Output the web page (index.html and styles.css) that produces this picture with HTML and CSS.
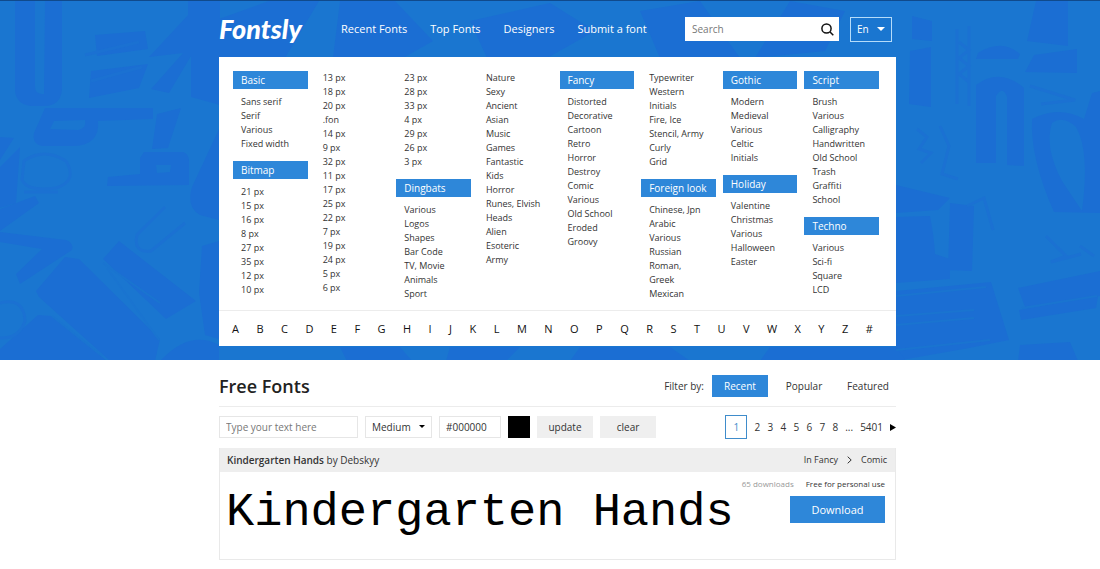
FILE: index.html
```html
<!DOCTYPE html>
<html lang="en">
<head>
<meta charset="utf-8">
<meta name="viewport" content="width=device-width, initial-scale=1">
<title>Fontsly - Free Fonts</title>
<link rel="stylesheet" href="styles.css">
</head>
<body>
<div class="hero">
  <svg class="hero-art" viewBox="0 0 1100 360" preserveAspectRatio="xMidYMin slice" aria-hidden="true">
    <g class="art-fill">
      <path d="M15 0h20v85q0 9 9 8l1-93h17v88q-1 17-18 17H31q-16-2-16-17z"/>
      <path fill-rule="evenodd" d="M45 107h108v11l-55 2q2 24-24 25H42q-10-2-8-13zM54 120l-4 8 28 1q9-2 7-10z"/>
      <path d="M188 0h32v104l-29-8V55l-22 37-18-4 32-36-34 4 39-42z"/>
      <path fill-rule="evenodd" d="M108 176l32-3v-16l4-6h39q6 2 6 9v24l-82 1zM156 164l1 8 13-1 1-7z"/>
      <path d="M157 113l24-6-13 40-16 1zM0 136l14 1-14 22zM0 166l20-20-4 56-16 5zM0 208l35-13 4 7-39 28zM0 231l66 8q8 3 6 10l-52 34-4-10 26-25-42-7z"/>
      <path d="M219 128l-27 58q-6 20 8 28l19 5zM202 245l-3 47 6 42 14 4v-98zM119 240l77 60-30 18-63-60zM65 256l14 2 81 80-5 22h-45L39 296l-3-6zM0 348l38-34 13 1 56 45H0z"/>
      <path d="M160 360q30-32 59-16v16zM95 34l50-4 3 18-51 7zM91 70l57-7-9 24-50 10z"/>
      <path d="M1036 0l-9 40 41 5V0zM978 52q24-15 42 1l-2 5h-42zM1034 54l43-6v24l-52-1zM976 84q24-18 48 3v78l-17-1V96q-4-12-11-1v67h-20z"/>
      <path fill-rule="evenodd" d="M1032 118q27-14 52 0l8-26 8-2v122l-46-1q-24-54-22-93zM1052 122q-8 24 10 58l20 30q8-60-6-84-13-12-24-4z"/>
      <path d="M912 15l20 5v20l-20-2zM910 50l21-4v60l-22-3zM896 184l54 13-12 12-42 3zM896 216l34-1q4 20 5 38l15 5v20l-54 4zM950 202l24 3-2 65-24-1zM896 290l95-9 18 58-40 8-73 13zM1018 287l82-17v25l-75 11zM1019 309l79-14-2 12-75 12zM1020 344l50-3 8 19h-60z"/>
      <path d="M219 18l50-18h50L285 57h-66zM340 0h55l38 40-30 17h-70zM470 20l80-18 45 28-48 27h-60zM640 10l60-10 40 57h-80zM790 0l55 10-20 40-70 7zM340 346h60l12 14h-65zM450 346h70l-14 14h-60zM580 346h90l20 14H570zM770 346h126l10 14H760z"/>
    </g>
    <g class="art-line">
      <path d="M24 160q20-14 42 0 12 20-10 27-28 4-34-8zM0 302q24-6 25 18-6 18-25 17M165 206l-28 28q-4 18 14 16l34-28M85 54l54-13M91 80l51-14M24 191h34"/>
      <path d="M957 28v75M969 25v80M959 41l10 8-10 8 10 8-10 8 10 8M917 128l10 8-8 12 12 4-10 10M940 125l9 20-7 28 16 5M1030 85l45 14-34 4M1046 235l20 20-15 6 30-8M1080 245l14 10M967 205l17-8 9 32"/>
    </g>
    <g class="art-light">
      <path d="M103 262l57 40M52 315l50 40M107 267l52 72M896 295l90-9M896 315l78-6M896 324l78-7M896 349l94-10M1022 307l75-12"/>
    </g>
  </svg>

  <div class="container">
    <header class="topbar">
      <a class="logo" href="#">Fontsly</a>
      <nav class="main-nav" aria-label="Main">
        <a href="#">Recent Fonts</a>
        <a href="#">Top Fonts</a>
        <a href="#">Designers</a>
        <a href="#">Submit a font</a>
      </nav>
      <form class="search" role="search">
        <input type="search" placeholder="Search" aria-label="Search">
        <button type="submit" aria-label="Search">
          <svg viewBox="0 0 13 13" width="13" height="13" aria-hidden="true"><circle cx="5.5" cy="5.5" r="4.6"/><path d="M9 9l3.3 3.3"/></svg>
        </button>
      </form>
      <div class="select lang">
        <select aria-label="Language"><option>En</option></select>
        <svg viewBox="0 0 8 4" width="8" height="4" aria-hidden="true"><path d="M0 0h8L4 4z"/></svg>
      </div>
    </header>

    <div class="panel">
      <div class="categories">
        <div class="col">
          <section><h2>Basic</h2>
            <ul><li><a href="#">Sans serif</a></li><li><a href="#">Serif</a></li><li><a href="#">Various</a></li><li><a href="#">Fixed width</a></li></ul></section>
          <section><h2>Bitmap</h2>
            <ul><li><a href="#">21 px</a></li><li><a href="#">15 px</a></li><li><a href="#">16 px</a></li><li><a href="#">8 px</a></li><li><a href="#">27 px</a></li><li><a href="#">35 px</a></li><li><a href="#">12 px</a></li><li><a href="#">10 px</a></li></ul></section>
        </div>
        <div class="col">
          <section><ul><li><a href="#">13 px</a></li><li><a href="#">18 px</a></li><li><a href="#">20 px</a></li><li><a href="#">.fon</a></li><li><a href="#">14 px</a></li><li><a href="#">9 px</a></li><li><a href="#">32 px</a></li><li><a href="#">11 px</a></li><li><a href="#">17 px</a></li><li><a href="#">25 px</a></li><li><a href="#">22 px</a></li><li><a href="#">7 px</a></li><li><a href="#">19 px</a></li><li><a href="#">24 px</a></li><li><a href="#">5 px</a></li><li><a href="#">6 px</a></li></ul></section>
        </div>
        <div class="col">
          <section><ul><li><a href="#">23 px</a></li><li><a href="#">28 px</a></li><li><a href="#">33 px</a></li><li><a href="#">4 px</a></li><li><a href="#">29 px</a></li><li><a href="#">26 px</a></li><li><a href="#">3 px</a></li></ul></section>
          <section><h2>Dingbats</h2>
            <ul><li><a href="#">Various</a></li><li><a href="#">Logos</a></li><li><a href="#">Shapes</a></li><li><a href="#">Bar Code</a></li><li><a href="#">TV, Movie</a></li><li><a href="#">Animals</a></li><li><a href="#">Sport</a></li></ul></section>
        </div>
        <div class="col">
          <section><ul><li><a href="#">Nature</a></li><li><a href="#">Sexy</a></li><li><a href="#">Ancient</a></li><li><a href="#">Asian</a></li><li><a href="#">Music</a></li><li><a href="#">Games</a></li><li><a href="#">Fantastic</a></li><li><a href="#">Kids</a></li><li><a href="#">Horror</a></li><li><a href="#">Runes, Elvish</a></li><li><a href="#">Heads</a></li><li><a href="#">Alien</a></li><li><a href="#">Esoteric</a></li><li><a href="#">Army</a></li></ul></section>
        </div>
        <div class="col">
          <section><h2>Fancy</h2>
            <ul><li><a href="#">Distorted</a></li><li><a href="#">Decorative</a></li><li><a href="#">Cartoon</a></li><li><a href="#">Retro</a></li><li><a href="#">Horror</a></li><li><a href="#">Destroy</a></li><li><a href="#">Comic</a></li><li><a href="#">Various</a></li><li><a href="#">Old School</a></li><li><a href="#">Eroded</a></li><li><a href="#">Groovy</a></li></ul></section>
        </div>
        <div class="col">
          <section><ul><li><a href="#">Typewriter</a></li><li><a href="#">Western</a></li><li><a href="#">Initials</a></li><li><a href="#">Fire, Ice</a></li><li><a href="#">Stencil, Army</a></li><li><a href="#">Curly</a></li><li><a href="#">Grid</a></li></ul></section>
          <section><h2>Foreign look</h2>
            <ul><li><a href="#">Chinese, Jpn</a></li><li><a href="#">Arabic</a></li><li><a href="#">Various</a></li><li><a href="#">Russian</a></li><li><a href="#">Roman,<br>Greek</a></li><li><a href="#">Mexican</a></li></ul></section>
        </div>
        <div class="col">
          <section><h2>Gothic</h2>
            <ul><li><a href="#">Modern</a></li><li><a href="#">Medieval</a></li><li><a href="#">Various</a></li><li><a href="#">Celtic</a></li><li><a href="#">Initials</a></li></ul></section>
          <section><h2>Holiday</h2>
            <ul><li><a href="#">Valentine</a></li><li><a href="#">Christmas</a></li><li><a href="#">Various</a></li><li><a href="#">Halloween</a></li><li><a href="#">Easter</a></li></ul></section>
        </div>
        <div class="col">
          <section><h2>Script</h2>
            <ul><li><a href="#">Brush</a></li><li><a href="#">Various</a></li><li><a href="#">Calligraphy</a></li><li><a href="#">Handwritten</a></li><li><a href="#">Old School</a></li><li><a href="#">Trash</a></li><li><a href="#">Graffiti</a></li><li><a href="#">School</a></li></ul></section>
          <section><h2>Techno</h2>
            <ul><li><a href="#">Various</a></li><li><a href="#">Sci-fi</a></li><li><a href="#">Square</a></li><li><a href="#">LCD</a></li></ul></section>
        </div>
      </div>
      <nav class="alphabet" aria-label="Fonts by letter">
        <a href="#">A</a><a href="#">B</a><a href="#">C</a><a href="#">D</a><a href="#">E</a><a href="#">F</a><a href="#">G</a><a href="#">H</a><a href="#">I</a><a href="#">J</a><a href="#">K</a><a href="#">L</a><a href="#">M</a><a href="#">N</a><a href="#">O</a><a href="#">P</a><a href="#">Q</a><a href="#">R</a><a href="#">S</a><a href="#">T</a><a href="#">U</a><a href="#">V</a><a href="#">W</a><a href="#">X</a><a href="#">Y</a><a href="#">Z</a><a href="#">#</a>
      </nav>
    </div>
  </div>
</div>

<main class="container">
  <div class="heading">
    <h1>Free Fonts</h1>
    <div class="filter">
      <span>Filter by:</span>
      <button type="button" class="tab active">Recent</button>
      <button type="button" class="tab">Popular</button>
      <button type="button" class="tab">Featured</button>
    </div>
  </div>

  <div class="toolbar">
    <form class="preview-form">
      <input class="field text" type="text" placeholder="Type your text here" aria-label="Preview text">
      <div class="select size">
        <select aria-label="Size"><option>Medium</option></select>
        <svg viewBox="0 0 6 3" width="6" height="3" aria-hidden="true"><path d="M0 0h6L3 3z"/></svg>
      </div>
      <input class="field hex" type="text" value="#000000" aria-label="Colour">
      <button type="button" class="swatch" aria-label="Pick a colour"></button>
      <button type="button" class="btn-grey">update</button>
      <button type="button" class="btn-grey">clear</button>
    </form>
    <nav class="pages" aria-label="Pages">
      <a class="current" href="#">1</a>
      <a href="#">2</a><a href="#">3</a><a href="#">4</a><a href="#">5</a><a href="#">6</a><a href="#">7</a><a href="#">8</a><span>...</span><a href="#">5401</a>
      <a class="next" href="#" aria-label="Next page"><svg viewBox="0 0 6 7" width="6" height="7" aria-hidden="true"><path d="M0 0l6 3.5L0 7z"/></svg></a>
    </nav>
  </div>

  <article class="font-card">
    <header class="font-head">
      <div><a class="font-name" href="#">Kindergarten Hands</a> by <a href="#">Debskyy</a></div>
      <div class="crumbs"><span>In <a href="#">Fancy</a></span>
        <svg viewBox="0 0 5 8" width="5" height="8" aria-hidden="true"><path d="M.7.7L4.2 4 .7 7.3"/></svg>
        <a href="#">Comic</a></div>
    </header>
    <div class="font-body">
      <div class="sample">Kindergarten Hands</div>
      <div class="side">
        <div class="meta"><span class="count">65 downloads</span><span>Free for personal use</span></div>
        <button type="button" class="download">Download</button>
      </div>
    </div>
  </article>
</main>
</body>
</html>
```
FILE: styles.css
```css
* { box-sizing: border-box; }

body {
  margin: 0;
  background: #fff;
  color: #333;
  font-family: "Open Sans", "Noto Sans", sans-serif;
  font-size: 10px;
  line-height: 14px;
}

a { color: inherit; text-decoration: none; }
h1, h2, ul { margin: 0; padding: 0; }
ul { list-style: none; }
input, select, button { margin: 0; border: 0; border-radius: 0; font: inherit; color: inherit; }
button { padding: 0; background: none; cursor: pointer; }
svg { display: block; }

.hero, main { padding-left: 15px; }

.container > .topbar, .container > .panel, .heading, .toolbar, .font-card {
  width: 100%;
  max-width: 677px;
  margin-left: auto;
  margin-right: auto;
}

/* Hero */
.hero {
  position: relative;
  padding-bottom: 14px;
  border-top: 1px solid #104a8c;
  background: #1a76d0;
}
.hero-art { position: absolute; inset: 0; width: 100%; height: 100%; }
.hero .container { position: relative; }
.art-fill { fill: #1b6ed3; }
.art-line { fill: none; stroke: #1b71d2; stroke-width: 3; }
.art-light { fill: none; stroke: #1a74d0; stroke-width: 2; }

.topbar { display: flex; align-items: center; height: 56px; padding-right: 4px; color: #fff; }
.logo { width: 122px; font: italic 900 27px/34px Lato, sans-serif; }
.main-nav { display: flex; gap: 23px; font-size: 11px; font-weight: 500; }
.search { display: flex; width: 154px; height: 24px; margin-left: auto; background: #fff; }
.search input { flex: 1; min-width: 0; padding: 0 7px; background: none; color: #333; outline: 0; appearance: none; }
.search button { width: 24px; display: grid; place-items: center; }
.search svg { fill: none; stroke: #111; stroke-width: 1.5; }
::placeholder { color: #777; opacity: 1; }

.select { position: relative; }
.select select { width: 100%; height: 100%; padding: 0 6px; appearance: none; background: none; }
.select svg { position: absolute; top: 50%; right: 6px; margin-top: -2px; pointer-events: none; }
.lang { width: 42px; height: 25px; margin-left: 11px; border: 1px solid #b5dcfa; }
.lang svg { fill: #fff; }
.lang option { color: #333; }

/* Category panel */
.panel { background: #fff; }
.categories { display: grid; grid-template-columns: repeat(8, 1fr); gap: 7px; padding: 14px 17px 9px 14px; }
.col { display: flex; flex-direction: column; gap: 10px; min-width: 0; }
.col h2 { margin-bottom: 6px; padding-left: 8px; background: #2e87d9; color: #fff; font-size: 10px; font-weight: 500; line-height: 18px; }
.col ul { padding-left: 8px; font-size: 9px; white-space: nowrap; }
.alphabet { display: flex; justify-content: space-between; padding: 11px 23px 10px 13px; border-top: 1px solid #ececec; color: #111; font-size: 11px; font-weight: 500; }

/* Listing */
.heading { display: flex; justify-content: space-between; align-items: center; padding: 14px 0 8px; border-bottom: 1px solid #ececec; }
h1 { color: #222; font-size: 18px; font-weight: 600; line-height: 24px; }
.filter { display: flex; align-items: center; gap: 8px; }
.tab { min-width: 56px; height: 22px; }
.tab.active { background: #2e87d9; color: #fff; }

.toolbar { display: flex; justify-content: space-between; align-items: center; padding: 8px 0 9px; }
.preview-form { display: flex; gap: 7px; }
.field, .size { height: 22px; border: 1px solid #e6e6e6; background: #fff; }
.field { padding: 0 6px; }
.text { width: 139px; }
.size { width: 67px; }
.hex { width: 62px; }
.swatch { width: 22px; background: #000; }
.btn-grey { width: 56px; background: #efefef; }
.pages { display: flex; align-items: center; gap: 7px; }
.pages a { min-width: 6px; text-align: center; }
.pages .current { width: 22px; height: 24px; border: 1px solid #3f8ccb; color: #3f8ccb; line-height: 22px; }
.next svg { fill: #000; }

.font-card { border: 1px solid #e9e9e9; border-top: 0; }
.font-head { display: flex; justify-content: space-between; align-items: center; height: 24px; padding: 0 8px 0 7px; background: #eee; }
.font-name { font-weight: 600; }
.crumbs { display: flex; align-items: center; gap: 9px; font-size: 9px; }
.crumbs svg { fill: none; stroke: #333; }
.font-body { display: flex; justify-content: space-between; min-height: 87px; padding: 5px 10px 0 6px; }
.sample { padding-top: 9px; color: #000; font: 47px/54px "Liberation Mono", monospace; white-space: nowrap; }
.side { display: flex; flex-direction: column; align-items: flex-end; width: 0; }
.meta { display: flex; gap: 12px; margin-bottom: 5px; font-size: 8px; white-space: nowrap; }
.count { color: #999; }
.download { width: 95px; height: 27px; background: #2e87d9; color: #fff; font-size: 11px; }
```
